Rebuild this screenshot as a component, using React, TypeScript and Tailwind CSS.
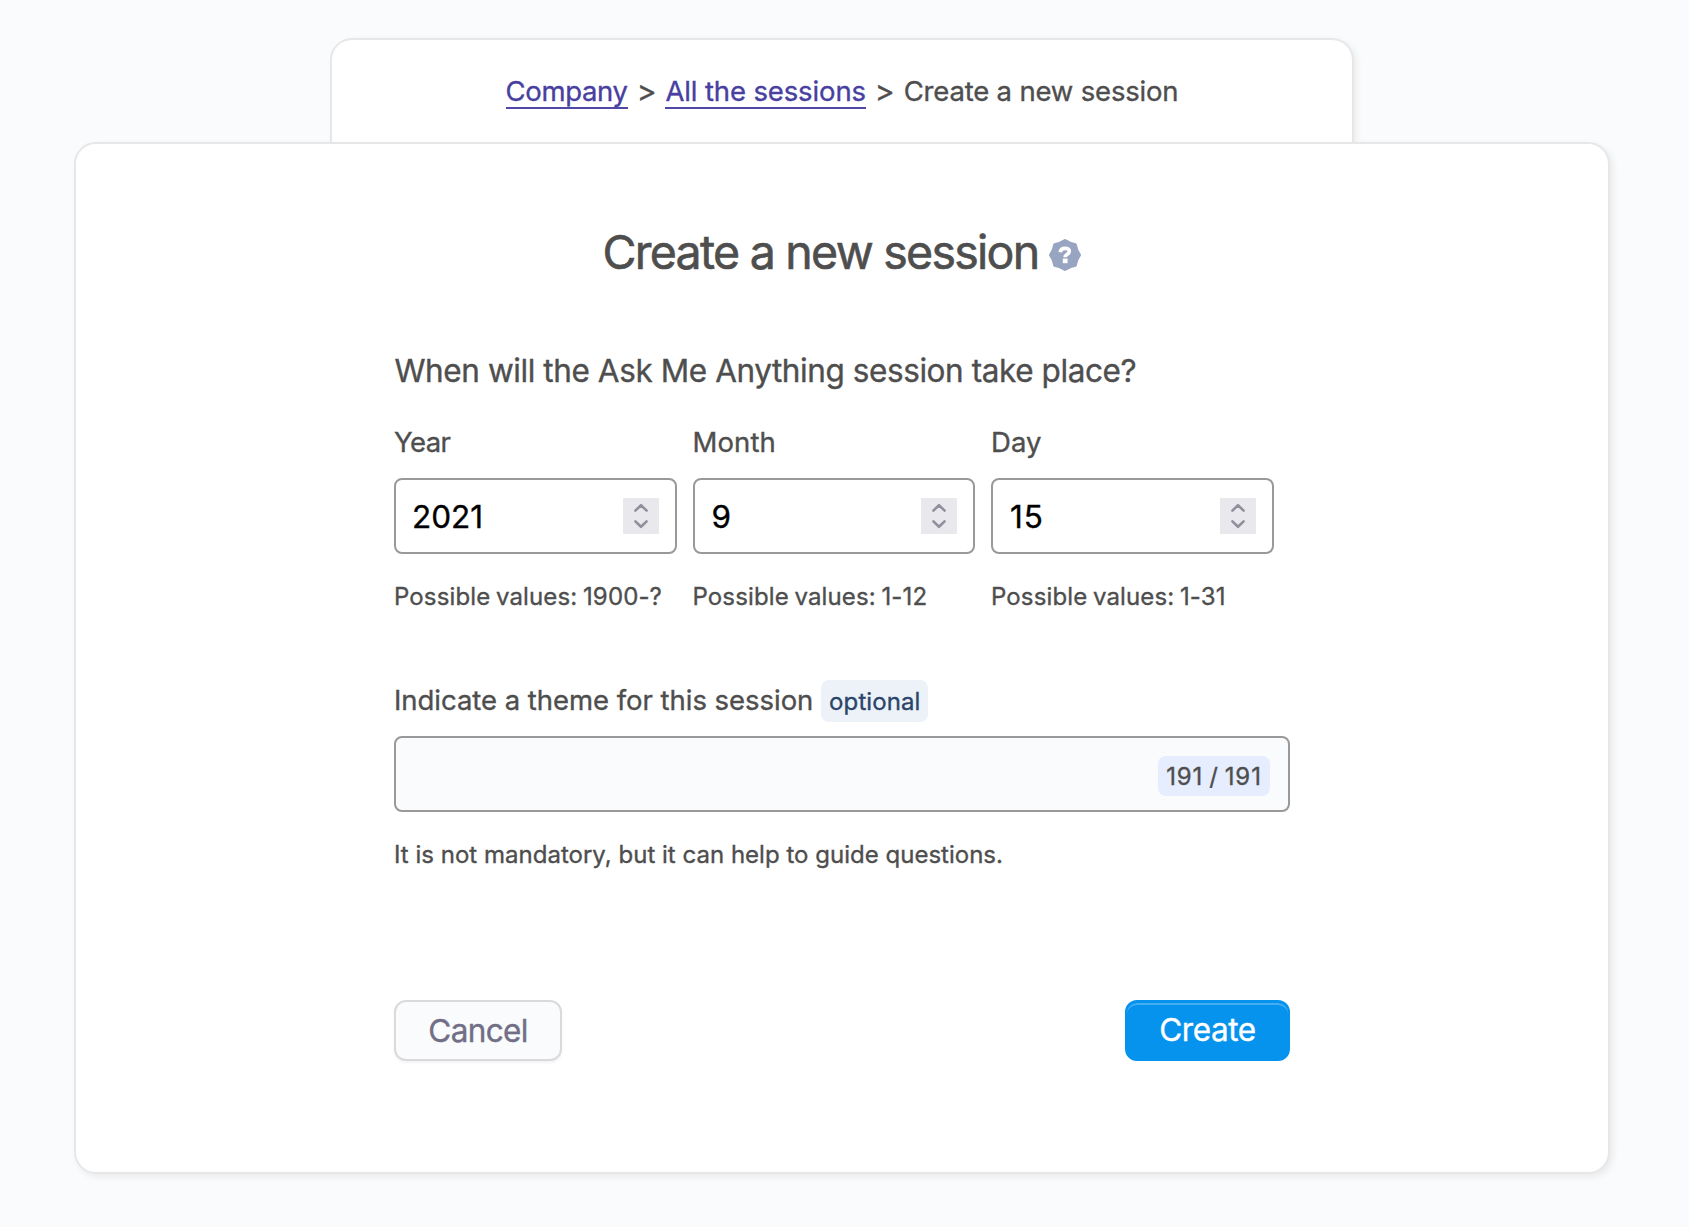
import React, { useState } from "react";

const badgePoints = Array.from({ length: 16 }, (_, i) => {
  const angle = (i * Math.PI) / 8;
  const radius = i % 2 === 0 ? 14.5 : 12.8;
  return `${(16 + radius * Math.sin(angle)).toFixed(2)},${(16 - radius * Math.cos(angle)).toFixed(2)}`;
}).join(" ");

function HelpBadge() {
  return (
    <svg className="mt-1.5 size-8 shrink-0" viewBox="0 0 32 32" fill="none" aria-label="Help">
      <polygon points={badgePoints} fill="#98a5c1" stroke="#98a5c1" strokeWidth="3" strokeLinejoin="round" />
      <path
        d="M11.2 13.2C11.6 10.5 13.4 9.4 16 9.4C18.8 9.4 20.3 10.7 20.3 12.6C20.3 15.4 16.1 15 16.1 18.3"
        stroke="#fff"
        strokeWidth="3.6"
      />
      <rect x="13.8" y="19.6" width="4.8" height="4.6" fill="#fff" />
    </svg>
  );
}

function Separator() {
  return <span className="w-[37.8px] text-center text-[30px] leading-[42px]">&gt;</span>;
}

function Stepper() {
  return (
    <span className="flex size-9 shrink-0 items-center justify-center bg-[#e9e8ed]">
      <svg className="size-9" viewBox="0 0 36 36" fill="none" stroke="#8f8f9d" strokeWidth="2.6" strokeLinecap="round" strokeLinejoin="round">
        <path d="M12.4 12.6L18 7.2L23.6 12.6" />
        <path d="M12.4 23.4L18 28.8L23.6 23.4" />
      </svg>
    </span>
  );
}

type FieldProps = { label: string; value: string; hint: string; labelClass: string; inputClass: string };

function NumberField({ label, value, hint, labelClass, inputClass }: FieldProps) {
  const [current, setCurrent] = useState(value);
  return (
    <label className="block w-[282.5px]">
      <span className={`block text-[27.5px] leading-[42px] ${labelClass}`}>{label}</span>
      <span className="mt-[15px] flex h-[76px] items-center rounded-lg border-2 border-[#999] bg-white pr-[15.7px] pl-4">
        <input
          className={`w-0 flex-1 bg-transparent pt-px text-[31.5px] leading-[44px] text-black outline-none ${inputClass}`}
          value={current}
          onChange={(e) => setCurrent(e.target.value)}
        />
        <Stepper />
      </span>
      <span className="mt-[25px] block text-[24px] leading-9 tracking-[0.13px] [word-spacing:-1.2px] whitespace-nowrap">{hint}</span>
    </label>
  );
}

export default function App() {
  return (
    <div className="min-h-[1227px] bg-[#fafbfd] pt-[38px] pl-[74px] font-['Inter',sans-serif] text-[#4e4e4e] [-webkit-text-stroke-width:0.35px]">
      <div className="flex w-[1536px] flex-col items-center">
        <nav className="flex h-[104px] w-[1024px] justify-center rounded-t-[22px] border-2 border-b-0 border-[#e7e7e8] bg-white pt-[30px] text-[27.5px] leading-[42px] whitespace-nowrap shadow-[3px_2px_6px_rgba(0,0,0,0.06)]">
          <a href="#" className="h-[39px] border-b-2 border-[#5048a6] tracking-[-0.343px] text-[#483fa0]">
            Company
          </a>
          <Separator />
          <a href="#" className="h-[39px] border-b-2 border-[#5048a6] tracking-[-0.135px] text-[#483fa0]">
            All the sessions
          </a>
          <Separator />
          <span className="tracking-[-0.182px]">Create a new session</span>
        </nav>

        <main className="relative flex h-[1032px] w-full flex-col items-center rounded-[22px] border-2 border-[#e7e7e8] bg-white pt-[78px] shadow-[3px_3px_7px_rgba(0,0,0,0.07)]">
          <div className="flex items-center gap-[11px]">
            <h1 className="text-[46.5px] leading-[60px] tracking-[-1.74px] whitespace-nowrap [-webkit-text-stroke-width:0.6px]">Create a new session</h1>
            <HelpBadge />
          </div>

          <form className="w-[896px]" onSubmit={(e) => e.preventDefault()}>
            <h2 className="mt-[67px] pl-[0.5px] text-[31.5px] leading-[44px] tracking-[-0.415px] whitespace-nowrap">
              When will the Ask Me Anything session take place?
            </h2>
            <div className="mt-7 flex gap-4">
              <NumberField label="Year" value="2021" hint="Possible values: 1900-?" labelClass="tracking-[-0.6px]" inputClass="tracking-normal" />
              <NumberField label="Month" value="9" hint="Possible values: 1-12" labelClass="tracking-[0.1px]" inputClass="pl-px tracking-normal" />
              <NumberField label="Day" value="15" hint="Possible values: 1-31" labelClass="tracking-[0.05px]" inputClass="pl-px tracking-[1px]" />
            </div>

            <div className="mt-[65px] flex h-[42px] items-center gap-2">
              <span className="-mt-0.5 text-[27.5px] leading-[42px] tracking-[-0.035px] whitespace-nowrap">
                Indicate a theme for this session
              </span>
              <span className="h-[42px] w-[107px] rounded-lg bg-[#edf2f9] text-center text-[24px] leading-[43px] tracking-[0.1px] text-[#2b446a]">
                optional
              </span>
            </div>
            <div className="mt-3.5 flex h-[76px] items-center rounded-lg border-2 border-[#999] bg-[#fafbfd] pr-[18px]">
              <input className="h-full w-0 flex-1 bg-transparent px-4 text-[31.5px] text-black outline-none" aria-label="Theme" />
              <span className="mt-1 h-10 w-28 rounded-lg bg-[#e5edff] text-center text-[24px] leading-[41px] tracking-[0.9px] [word-spacing:-1.7px]">
                191 / 191
              </span>
            </div>
            <p className="mt-[25px] text-[24px] leading-9 tracking-[0.015px] whitespace-nowrap">
              It is not mandatory, but it can help to guide questions.
            </p>

            <div className="mt-[127px] flex justify-between text-[31.5px]">
              <button className="h-[61px] w-[168px] rounded-xl border-2 border-[#dadadc] bg-[#fafbfd] leading-[57px] tracking-[-0.654px] text-[#716e86] shadow-[0_2px_3px_rgba(0,0,0,0.05)]">
                Cancel
              </button>
              <button className="h-[61px] w-[165px] rounded-xl border-2 border-t-3 border-[#0693ed] bg-[#0693ed] pb-0.5 leading-[54px] tracking-[-0.401px] text-white shadow-[inset_0_2px_0_rgba(255,255,255,0.25)]">
                Create
              </button>
            </div>
          </form>
        </main>
      </div>
    </div>
  );
}
